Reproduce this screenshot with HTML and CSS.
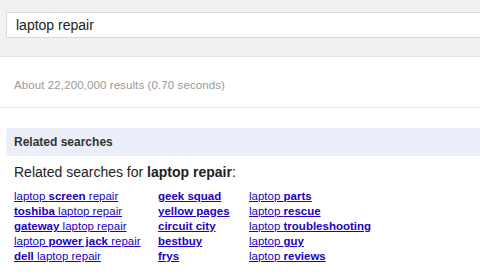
FILE: index.html
```html
<!DOCTYPE html>
<html lang="en">
<head>
  <meta charset="UTF-8">
  <title>laptop repair - Search</title>
  <link rel="stylesheet" href="styles.css">
</head>
<body>
  <div class="topbar">
    <div class="searchbox">laptop repair</div>
  </div>

  <div class="stats">About 22,200,000 results (0.70 seconds)</div>

  <div class="related">
    <div class="relhead">Related searches</div>
    <div class="reltitle">Related searches for <b>laptop repair</b>:</div>
    <div class="relgrid">
      <div class="relcol">
        <a href="#">laptop <b>screen</b> repair</a>
        <a href="#"><b>toshiba</b> laptop repair</a>
        <a href="#"><b>gateway</b> laptop repair</a>
        <a href="#">laptop <b>power jack</b> repair</a>
        <a href="#"><b>dell</b> laptop repair</a>
      </div>
      <div class="relcol">
        <a href="#"><b>geek squad</b></a>
        <a href="#"><b>yellow pages</b></a>
        <a href="#"><b>circuit city</b></a>
        <a href="#"><b>bestbuy</b></a>
        <a href="#"><b>frys</b></a>
      </div>
      <div class="relcol">
        <a href="#">laptop <b>parts</b></a>
        <a href="#">laptop <b>rescue</b></a>
        <a href="#">laptop <b>troubleshooting</b></a>
        <a href="#">laptop <b>guy</b></a>
        <a href="#">laptop <b>reviews</b></a>
      </div>
    </div>
  </div>
</body>
</html>
```

FILE: styles.css
```css
body {
  margin: 0;
  font-family: "Liberation Sans", Arial, sans-serif;
  background-color: #fff;
  color: #222;
  overflow: hidden;
}

.topbar {
  height: 57px;
  padding-top: 12px;
  box-sizing: border-box;
  background-color: #f1f1f1;
  border-bottom: 1px solid #e5e5e5;
}

.searchbox {
  margin-left: 6px;
  height: 24px;
  line-height: 24px;
  padding-left: 9px;
  font-size: 14px;
  color: #222;
  background-color: #fff;
  border: 1px solid #d9d9d9;
  border-right: none;
}

.stats {
  height: 50px;
  line-height: 57px;
  padding-left: 14px;
  font-size: 11.5px;
  letter-spacing: 0.1px;
  color: #999;
  border-bottom: 1px solid #e5e5e5;
}

.related {
  padding-top: 20px;
}

.relhead {
  margin-left: 6px;
  height: 28px;
  line-height: 28px;
  padding-left: 8px;
  font-size: 12px;
  font-weight: bold;
  color: #333;
  background-color: #ebeff9;
}

.reltitle {
  padding-left: 14px;
  margin-top: 6px;
  font-size: 14px;
  line-height: 20px;
  color: #222;
}

.relgrid {
  display: grid;
  grid-template-columns: 144px 91px auto;
  padding-left: 14px;
  margin-top: 7px;
}

.relcol {
  display: flex;
  flex-direction: column;
}

.relcol a {
  font-size: 11.5px;
  line-height: 15px;
  color: #2200c1;
  text-decoration: underline;
}
```
